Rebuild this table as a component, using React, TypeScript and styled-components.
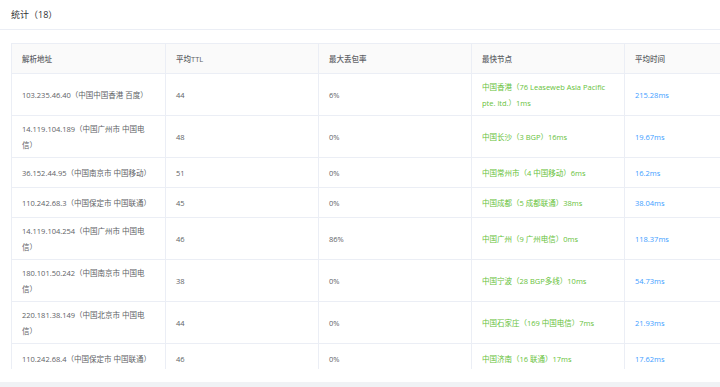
import React from "react";
import styled, { createGlobalStyle } from "styled-components";

const GlobalStyle = createGlobalStyle`
  body {
    margin: 0;
    background: #f0f2f5;
    font-family: "Open Sans", "Noto Sans CJK SC", sans-serif;
    color: #606266;
  }
`;

type Row = {
  addr: string;
  ttl: string;
  loss: string;
  node: string;
  time: string;
};

const rows: Row[] = [
  { addr: "103.235.46.40（中国中国香港 百度）", ttl: "44", loss: "6%", node: "中国香港（76 Leaseweb Asia Pacific pte. ltd.）1ms", time: "215.28ms" },
  { addr: "14.119.104.189（中国广州市 中国电信）", ttl: "48", loss: "0%", node: "中国长沙（3 BGP）16ms", time: "19.67ms" },
  { addr: "36.152.44.95（中国南京市 中国移动）", ttl: "51", loss: "0%", node: "中国常州市（4 中国移动）6ms", time: "16.2ms" },
  { addr: "110.242.68.3（中国保定市 中国联通）", ttl: "45", loss: "0%", node: "中国成都（5 成都联通）38ms", time: "38.04ms" },
  { addr: "14.119.104.254（中国广州市 中国电信）", ttl: "46", loss: "86%", node: "中国广州（9 广州电信）0ms", time: "118.37ms" },
  { addr: "180.101.50.242（中国南京市 中国电信）", ttl: "38", loss: "0%", node: "中国宁波（28 BGP多线）10ms", time: "54.73ms" },
  { addr: "220.181.38.149（中国北京市 中国电信）", ttl: "44", loss: "0%", node: "中国石家庄（169 中国电信）7ms", time: "21.93ms" },
  { addr: "110.242.68.4（中国保定市 中国联通）", ttl: "46", loss: "0%", node: "中国济南（16 联通）17ms", time: "17.62ms" },
];

export default function App() {
  return (
    <>
      <GlobalStyle />
      <Card>
        <CardHeader>统计（18）</CardHeader>
        <CardBody>
          <Scroller>
            <Table>
              <colgroup>
                <col style={{ width: 154 }} />
                <col style={{ width: 153 }} />
                <col style={{ width: 153 }} />
                <col style={{ width: 153 }} />
                <col style={{ width: 153 }} />
              </colgroup>
              <thead>
                <tr>
                  <Th>解析地址</Th>
                  <Th>平均TTL</Th>
                  <Th>最大丢包率</Th>
                  <Th>最快节点</Th>
                  <Th>平均时间</Th>
                </tr>
              </thead>
              <tbody>
                {rows.map((r, i) => (
                  <tr key={i}>
                    <Td>{r.addr}</Td>
                    <Td>{r.ttl}</Td>
                    <Td>{r.loss}</Td>
                    <Td tone="green">{r.node}</Td>
                    <Td tone="blue">{r.time}</Td>
                  </tr>
                ))}
              </tbody>
            </Table>
          </Scroller>
        </CardBody>
      </Card>
    </>
  );
}

const Card = styled.div`
  background: #fff;
  width: 100%;
  overflow: hidden;
`;

const CardHeader = styled.div`
  height: 29px;
  line-height: 29px;
  padding-left: 11px;
  font-size: 9px;
  color: #303133;
  border-bottom: 1px solid #ebeef5;
`;

const CardBody = styled.div`
  padding: 13px 0 13px 11px;
`;

const Scroller = styled.div`
  height: 326px;
  overflow: hidden;
`;

const Table = styled.table`
  width: 766px;
  table-layout: fixed;
  border-collapse: collapse;
  font-size: 7.5px;
  border-left: 1px solid #ebeef5;
  border-top: 1px solid #ebeef5;
`;

const Th = styled.th`
  height: 30px;
  box-sizing: border-box;
  padding: 0 10px;
  text-align: left;
  font-weight: 500;
  color: #606266;
  background: #fafafa;
  border-right: 1px solid #ebeef5;
  border-bottom: 1px solid #ebeef5;
`;

const toneColor = { green: "#67c23a", blue: "#409eff", plain: "#606266" };

const Td = styled.td<{ tone?: "green" | "blue" | "plain" }>`
  height: 30px;
  box-sizing: border-box;
  padding: 4.5px 10px;
  line-height: 16px;
  color: ${(p) => toneColor[p.tone || "plain"]};
  border-right: 1px solid #ebeef5;
  border-bottom: 1px solid #ebeef5;
  vertical-align: middle;
  word-break: break-word;
`;
